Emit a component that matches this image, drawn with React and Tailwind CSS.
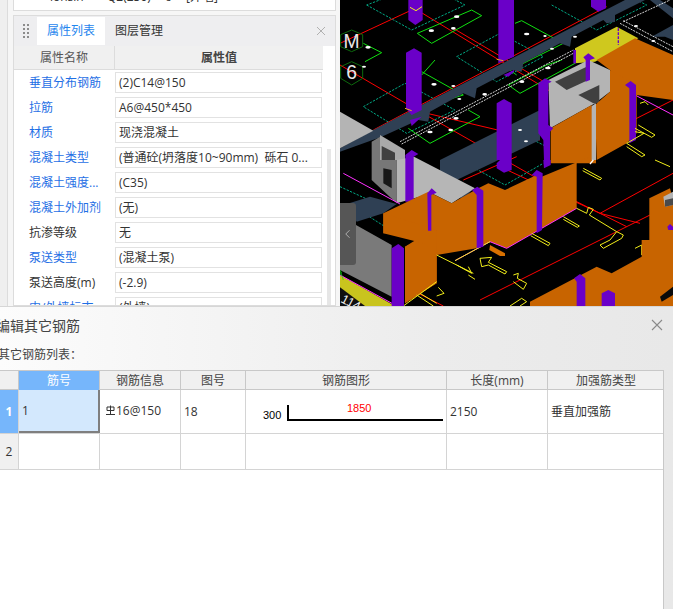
const FONT = "font-['Open_Sans','Noto_Sans_CJK_SC',sans-serif]";

const props = [
  { name: "垂直分布钢筋", value: "(2)C14@150", blue: true },
  { name: "拉筋", value: "A6@450*450", blue: true },
  { name: "材质", value: "现浇混凝土", blue: true },
  { name: "混凝土类型", value: "(普通砼(坍落度10~90mm)  砾石 0...", blue: true },
  { name: "混凝土强度...", value: "(C35)", blue: true },
  { name: "混凝土外加剂", value: "(无)", blue: true },
  { name: "抗渗等级", value: "无" },
  { name: "泵送类型", value: "(混凝土泵)", blue: true },
  { name: "泵送高度(m)", value: "(-2.9)" },
  { name: "内/外墙标志", value: "(外墙)", blue: true },
];

const gridCols = "grid grid-cols-[19px_81px_81px_65px_201px_101px_116px]";

function PropRow({ name, value, blue }) {
  return (
    <div className="flex h-[25px] shrink-0 items-center">
      <div className={`w-[101px] shrink-0 pt-[1px] pl-[15px] whitespace-nowrap ${blue ? "text-[#1f6fe5]" : "text-[#333]"}`}>
        {name}
      </div>
      <div className="flex h-[21px] w-[207px] shrink-0 items-center border border-[#e2e2e2] bg-white pt-[1px] pl-[3px] whitespace-pre text-[#333]">
        {value}
      </div>
    </div>
  );
}

function Canvas() {
  return (
    <svg viewBox="0 0 999 918" className="block h-[306px] w-[333px]">
      <rect width="999" height="918" fill="#000" />

      {/* axis lines */}
      <g stroke="#f00" strokeWidth="3" fill="none">
        <path d="M0 130 L215 30 M215 20 L690 310 M100 390 L800 20" />
        <path d="M0 195 L240 335 L600 420 M240 335 L600 540 M340 85 L475 165 L620 250" />
        <path d="M370 540 L530 470 M480 500 L780 640 L900 670 M780 640 L999 520" />
        <path d="M700 600 L860 680 M420 900 L930 645 M235 880 L310 918" />
        <path d="M880 360 L999 300" />
      </g>

      {/* dashed outlines */}
      <g stroke="#00a884" strokeWidth="3" fill="none" strokeDasharray="7 4">
        <path d="M80 15 L215 90 L375 15 L250 -50 Z" />
        <path d="M635 15 L770 90 L920 15 L850 -20" />
        <path d="M350 170 L480 100 L610 170 L470 245 Z" />
        <path d="M70 320 L195 250 L345 330 L200 400 Z" />
        <path d="M350 480 L470 420 M520 390 L620 440" />
        <path d="M360 480 L495 555 L610 490 M0 560 L130 620 L80 645 L135 680" />
      </g>

      {/* green rebar boxes */}
      <g stroke="#10e010" strokeWidth="3" fill="none">
        <path d="M232 100 L395 30 L425 47 L275 130 Z" />
        <path d="M525 70 L545 62 L670 130 L510 210 L490 190 M510 210 L530 225" />
        <path d="M245 225 L285 180 M245 215 L370 285 L320 300" />
        <path d="M505 255 L620 195 L665 180 M505 255 L540 280 L705 190" />
        <path d="M205 385 L270 430 L420 350 L385 330" />
        <path d="M520 400 L565 385 L600 410 L550 440 Z" />
        <path d="M70 130 L125 158 L75 185" />
      </g>

      {/* grid circles with axis names */}
      <g stroke="#0d6a0d" strokeWidth="3" fill="none">
        <path d="M35 90 L68 104 L68 140 L35 155 L2 140 L2 104 Z" />
        <path d="M35 185 L68 200 L68 235 L35 255 L2 235 L2 200 Z" />
      </g>
      <g fill="#e8e8e8" fontSize="58" fontFamily="Liberation Sans, sans-serif" textAnchor="middle">
        <text x="35" y="144">M</text>
        <text x="35" y="238">6</text>
      </g>

      {/* beams */}
      <g fill="#2f4054">
        <path d="M0 455 L0 445 L100 390 L855 0 L915 0 L825 45 L825 65 L800 70 L790 60 L695 110 L690 140 L660 130 L550 190 L545 215 L515 210 L410 265 L405 295 L370 280 L270 335 L265 365 L235 360 L125 410 Z" />
        <path d="M300 480 L600 330 L600 420 L350 540 L300 530 Z" />
        <path d="M930 0 L960 0 L999 25 L999 55 Z M935 110 L999 75 L999 120 L975 110 Z" />
        <path d="M20 612 L90 590 L170 612 L130 640 L50 665 Z" />
        <path d="M230 480 L400 565 L370 600 L300 530 Z" />
        <path d="M925 915 L985 880 L999 880 L999 918 L925 918 Z" />
      </g>

      {/* purple columns, top part */}
      <g fill="#6a00c8">
        <path d="M205 0 L248 0 L248 60 L226 75 L205 60 Z" />
        <path d="M198 158 L222 145 L245 158 L245 330 L215 345 L198 325 Z" />
        <path d="M210 360 L245 350 L215 378 Z" />
        <path d="M475 0 L522 0 L522 170 L475 190 Z" />
        <path d="M490 225 L522 210 L522 215 L505 230 Z" />
        <path d="M470 310 L492 297 L515 310 L515 480 L470 480 Z" />
        <path d="M753 0 L798 0 L798 25 L775 35 L753 20 Z" />
      </g>

      {/* white dashed run */}
      <g stroke="#fff" strokeWidth="2.5" fill="none" strokeDasharray="6 3">
        <path d="M180 425 L700 150" />
        <path d="M185 432 L700 160" />
        <path d="M840 70 L999 155" />
        <path d="M850 62 L999 140" />
        <path d="M850 65 L990 0" />
      </g>

      {/* small white marks */}
      <g fill="#fff">
        <ellipse cx="84" cy="142" rx="8" ry="4" />
        <ellipse cx="72" cy="200" rx="6" ry="3" />
        <ellipse cx="274" cy="92" rx="8" ry="4" />
        <ellipse cx="340" cy="85" rx="7" ry="4" />
        <ellipse cx="350" cy="50" rx="8" ry="4" />
        <ellipse cx="560" cy="102" rx="8" ry="4" />
        <ellipse cx="615" cy="108" rx="5" ry="3" />
        <ellipse cx="636" cy="146" rx="6" ry="3" />
        <ellipse cx="705" cy="110" rx="6" ry="3" />
        <ellipse cx="888" cy="78" rx="6" ry="3" />
        <ellipse cx="940" cy="123" rx="6" ry="3" />
        <ellipse cx="282" cy="253" rx="8" ry="4" />
        <ellipse cx="340" cy="258" rx="6" ry="3" />
        <ellipse cx="358" cy="297" rx="6" ry="3" />
        <ellipse cx="434" cy="283" rx="7" ry="4" />
        <ellipse cx="546" cy="245" rx="7" ry="4" />
        <ellipse cx="624" cy="204" rx="8" ry="4" />
        <ellipse cx="348" cy="355" rx="8" ry="4" />
        <ellipse cx="332" cy="390" rx="7" ry="4" />
        <ellipse cx="270" cy="396" rx="8" ry="4" />
        <ellipse cx="540" cy="390" rx="6" ry="3" />
        <ellipse cx="558" cy="424" rx="6" ry="3" />
      </g>

      {/* gray block at far left top */}
      <path d="M0 335 L100 392 L0 445 Z" fill="#b4b4b4" />

      {/* center gray block */}
      <path d="M95 425 L120 410 L120 480 L170 480 L170 610 L95 540 Z" fill="#777" />
      <path d="M120 405 L195 450 L195 480 L120 480 Z" fill="#a9a9a9" />
      <path d="M125 438 L165 458 L165 480 L125 480 Z" fill="#404040" />
      <path d="M130 505 L155 510 L155 565 L130 550 Z" fill="#181818" />
      <path d="M170 480 L222 470 L405 565 L335 610 L275 580 L170 610 Z" fill="#b6b6b6" />
      <path d="M196 465 L215 450 L235 462 L221 470 L221 605 L196 605 Z" fill="#6a00c8" />
      <path d="M10 520 L180 612" stroke="#ff30ff" strokeWidth="3" />

      {/* yellow floor patches */}
      <path d="M705 145 L830 80 L895 115 L765 185 L705 190 Z" fill="#cfc81e" />
      <path d="M835 85 L835 135" stroke="#6a00c8" strokeWidth="4" strokeDasharray="8 4" />

      {/* right upper wall */}
      <path d="M770 180 L885 115 L999 165 L999 300 L890 285 L810 210 Z" fill="#c86400" />
      <path d="M885 285 L999 345" stroke="#ff30ff" strokeWidth="3" />
      <path d="M625 240 L745 180 L810 210 L810 275 L765 310 L630 385 Z" fill="#b4b4b4" />
      <path d="M645 245 L740 200 L740 242 L680 270 Z" fill="#404040" />
      <path d="M715 285 L778 255 L778 310 L760 310 Z" fill="#404040" />
      <path d="M810 210 L890 255 L890 400 L860 430 L770 480 L765 315 L810 275 Z" fill="#c86400" />
      <path d="M632 385 L755 315 L768 480 L768 490 L632 490 Z" fill="#c86400" />
      <path d="M755 318 L768 310 L768 480 L755 480 Z" fill="#b4b4b4" />

      {/* purple wall edges */}
      <g fill="#6a00c8">
        <path d="M595 250 L615 235 L635 245 L625 250 L625 375 L640 385 L630 395 L630 480 L612 480 L610 420 L595 400 Z" />
        <path d="M730 172 L745 160 L765 175 L750 180 L750 240 L737 245 L737 180 Z" />
        <path d="M855 255 L872 243 L888 255 L888 420 L868 430 L868 265 Z" />
        <path d="M700 150 L708 150 L708 190 L700 190 Z" />
      </g>

      {/* yellow rebar, top */}
      <g stroke="#f2ee1a" strokeWidth="3" fill="none">
        <path d="M900 310 L915 305 L925 315 M895 375 L945 405 L935 412 L885 385" />
        <path d="M885 395 L912 400 L860 430 L915 465 L905 470 L860 440" />
        <path d="M210 22 L228 32 L246 20" />
        <path d="M470 178 L490 182 M195 325 L215 332" stroke="#e8b020" />
      </g>

      {/* lower part of scene */}
      <path d="M0 640 L48 675 L155 735 L155 890 L0 810 Z" fill="#7a7a7a" />
      <path d="M0 825 L165 918 L0 918 Z" fill="#c9c41e" />
      <path d="M0 825 L165 915" stroke="#ff30ff" strokeWidth="3" fill="none" />
      <path d="M0 862 L75 918 L0 918 Z" fill="#101010" />
      <text x="0" y="905" fill="#f4f4f4" fontSize="38" fontFamily="Liberation Sans, sans-serif" transform="rotate(28 0 905)">114</text>
      <path d="M0 810 L10 840 M5 815 L-5 835" stroke="#10e010" strokeWidth="2" />

      <path d="M130 640 L265 575 L335 610 L415 565 L445 550 L495 570 L590 525 L605 530 L750 470 L710 490 L710 625 L500 745 L450 725 L410 745 L290 765 L290 850 L195 910 L195 740 L290 690 L130 700 Z" fill="#c86400" />
      <path d="M290 680 L290 850 L195 910 L195 740 Z" fill="#c86400" />
      <path d="M130 640 L290 690 L290 760 L250 730 L130 700 Z" fill="#c86400" />
      <path d="M450 735 L495 760 L495 768 L480 768 L448 750 Z" fill="#d87000" />
      <path d="M480 480 L515 480 L515 510 L492 518 L470 505 L470 490 Z" fill="#6a00c8" />
      <path d="M710 625 L500 745 L450 725 L345 782" stroke="#ff30ff" strokeWidth="3" fill="none" />
      <path d="M190 918 L290 845 M290 765 L400 820 M345 782 L450 725" stroke="#f2ee1a" strokeWidth="3" fill="none" />
      <path d="M760 480 L750 492" stroke="#fff" strokeWidth="4" />

      <g fill="#6a00c8">
        <path d="M155 745 L175 732 L192 745 L192 918 L155 918 Z" />
        <path d="M262 580 L275 565 L290 578 L274 585 L274 692 L264 692 Z" />
        <path d="M396 570 L412 560 L430 572 L430 740 L410 745 L410 585 Z" />
        <path d="M575 525 L590 510 L608 520 L606 690 L590 700 L590 530 Z" />
        <path d="M610 480 L632 480 L632 495 L612 505 Z" />
      </g>

      {/* yellow rebar, bottom */}
      <g stroke="#f2ee1a" strokeWidth="3" fill="none">
        <path d="M730 505 L785 535 L780 540 L728 512" />
        <path d="M575 700 L630 730 L625 737 L572 707" />
        <path d="M670 650 L718 678 L712 682 L670 658" />
        <path d="M710 625 L740 640 L745 622 L760 628 L748 645 L830 695 L850 705 L845 715 L790 745 L780 735 L810 720 L830 695" />
        <path d="M420 775 L455 772 L445 787 L500 815 L495 822 L445 795 L425 800 Z" />
        <path d="M520 825 L535 820 L532 835 L560 850 L550 868 L520 845" />
        <path d="M350 795 L395 820 L385 800 M385 825 L405 838" />
        <path d="M295 862 L312 880 L290 888 M230 885 L280 918 M240 880 L290 910" />
        <path d="M510 918 L545 895 L560 905 L540 918" />
        <path d="M885 745 L905 735 L905 765" />
        <path d="M945 480 L990 500" />
      </g>

      {/* lower right wall */}
      <path d="M570 918 L570 905 L770 800 L815 820 L905 770 L905 720 L928 720 L928 595 L990 565 L999 600 L999 918 Z" fill="#c86400" />
      <path d="M970 590 L999 575 L999 615 L975 620 Z" fill="#b4b4b4" />
      <path d="M975 600 L999 595 L999 615 L975 620 Z" fill="#4a4a4a" />
      <path d="M960 890 L999 860 L999 885 L965 905 Z" fill="#0a0a0a" />
      <g fill="#6a00c8">
        <path d="M702 835 L720 822 L736 835 L736 918 L710 918 L710 845 Z" />
        <path d="M785 880 L805 870 L825 880 L825 918 L785 918 Z" />
        <path d="M982 680 L990 672 L999 680 L999 690 L985 690 Z" />
      </g>
    </svg>
  );
}

export default function App() {
  return (
    <div className={`h-[609px] w-[673px] overflow-hidden bg-white text-[12px] text-[#333] ${FONT}`}>
      {/* top part: property panel and 3d view */}
      <div className="relative flex h-[306px] overflow-hidden">
        <div className="flex h-[306px] w-[340px] shrink-0 overflow-hidden bg-[#f6f6f6]">
          <div className="h-full w-[8px] shrink-0 border-r border-[#dcdcdc] bg-[#efefef]" />
          <div className="ml-[5px] flex w-[323px] shrink-0 flex-col">
            <div className="h-[11px] shrink-0 overflow-hidden border-x border-b border-[#dcdcdc] bg-white">
              <div className="-mt-[12px] flex whitespace-nowrap text-[#333]">
                <span className="w-[93px] pl-[36px]">lonsin</span>
                <span className="w-[58px]">Q2(250)</span>
                <span className="w-[21px]">6</span>
                <span>[外墙]</span>
              </div>
            </div>
            <div className="mt-[4px] flex min-h-0 flex-1 flex-col border border-[#dcdcdc] bg-white">
              <div className="flex h-[30px] shrink-0 items-center bg-[#eeeef0]">
                <div className="flex w-[23px] justify-center">
                  <div className="grid grid-cols-2 gap-[2px]">
                    {[...Array(8)].map((_, i) => (
                      <span key={i} className="h-[2px] w-[2px] bg-[#8c8c8c]" />
                    ))}
                  </div>
                </div>
                <div className="flex h-[28px] w-[68px] items-center justify-center bg-white text-[#1f86ee]">属性列表</div>
                <div className="ml-[10px] text-[#333]">图层管理</div>
                <svg viewBox="0 0 10 10" className="ml-auto mr-[9px] h-[10px] w-[10px] text-[#b0b0b0]">
                  <path d="M1 1 L9 9 M9 1 L1 9" stroke="currentColor" strokeWidth="1" />
                </svg>
              </div>
              <div className="flex h-[24px] w-[309px] shrink-0 items-center border-b border-[#dcdcdc] bg-[#f0f0f0]">
                <div className="flex h-full w-[101px] items-center justify-center border-r border-[#dcdcdc] text-[#555]">属性名称</div>
                <div className="flex flex-1 items-center justify-center font-semibold text-[#444]">属性值</div>
              </div>
              <div className="relative min-h-0 flex-1 overflow-hidden">
                {props.map((p) => (
                  <PropRow key={p.name} {...p} />
                ))}
                <div className="absolute top-[79px] right-[4px] h-[200px] w-[4px] bg-[#e6e6e6]" />
              </div>
            </div>
          </div>
        </div>
        <Canvas />
        {/* collapse handle over the view */}
        <div className="absolute top-[203px] left-[340px] flex h-[62px] w-[16px] items-center justify-center rounded-r-[3px] bg-[#565656]">
          <svg viewBox="0 0 8 12" className="h-[10px] w-[6px] text-[#b8b8b8]">
            <path d="M6 1 L1 6 L6 11" fill="none" stroke="currentColor" strokeWidth="1.2" />
          </svg>
        </div>
      </div>

      {/* dialog */}
      <div className="flex h-[303px] flex-col border-t border-[#d6d6d6] bg-gradient-to-r from-[#fcfcfc] via-[#ececec] via-65% to-[#e8e8e8]">
        <div className="flex h-[36px] shrink-0 items-center">
          <div className="-ml-[4px] text-[14px] text-[#444]">编辑其它钢筋</div>
          <svg viewBox="0 0 12 12" className="ml-auto mr-[10px] h-[12px] w-[12px] text-[#8a8a8a]">
            <path d="M1 1 L11 11 M11 1 L1 11" stroke="currentColor" strokeWidth="1.1" />
          </svg>
        </div>
        <div className="-ml-[2px] flex h-[27px] shrink-0 items-start pt-[3px] text-[#444]">其它钢筋列表：</div>
        <div className="mr-[9px] min-h-0 flex-1 border-t border-r border-[#c8c8c8] bg-white">
          <div className={`${gridCols} h-[19px] border-b border-[#c8c8c8] bg-[#f0f0f0] text-center leading-[19px] text-[#444]`}>
            <div className="border-r border-[#c8c8c8]" />
            <div className="border-r border-[#c8c8c8] bg-[#76b6fb] text-white">筋号</div>
            <div className="border-r border-[#c8c8c8]">钢筋信息</div>
            <div className="border-r border-[#c8c8c8]">图号</div>
            <div className="border-r border-[#c8c8c8]">钢筋图形</div>
            <div className="border-r border-[#c8c8c8]">长度(mm)</div>
            <div>加强筋类型</div>
          </div>
          <div className={`${gridCols} h-[44px] border-b border-[#d4d4d4]`}>
            <div className="flex items-center justify-center border-r border-[#d4d4d4] bg-[#76b6fb] font-bold text-white">1</div>
            <div className="flex items-center border-r-2 border-b-2 border-[#7f7f7f] bg-[#d3e8fd] pl-[3px]">1</div>
            <div className="flex items-center border-r border-[#d4d4d4] pl-[5px]">
              <svg viewBox="0 0 11 11" className="mb-[3px] h-[11px] w-[11px] shrink-0 text-[#333]">
                <path d="M2 5.5 L2 2 L9 2 L9 5.5 Z M5.5 0.5 L5.5 9 M1 9.5 L10 9.5" fill="none" stroke="currentColor" strokeWidth="1" />
              </svg>
              <span className="mb-[2px]">16@150</span>
            </div>
            <div className="flex items-center border-r border-[#d4d4d4] pl-[3px]">18</div>
            <div className="relative border-r border-[#d4d4d4]">
              <span className="absolute top-[17px] left-[17px] font-['Liberation_Sans',sans-serif] text-[11px] text-black">300</span>
              <span className="absolute top-[10px] left-[101px] font-['Liberation_Sans',sans-serif] text-[11px] text-[#f00]">1850</span>
              <div className="absolute top-[15px] left-[41px] h-[16px] w-[156px] border-b-2 border-l-2 border-black" />
            </div>
            <div className="flex items-center border-r border-[#d4d4d4] pl-[3px]">2150</div>
            <div className="flex items-center pl-[3px]">垂直加强筋</div>
          </div>
          <div className={`${gridCols} h-[36px] border-b border-[#d4d4d4]`}>
            <div className="flex items-center justify-center border-r border-[#d4d4d4] bg-[#f0f0f0]">2</div>
            <div className="border-r border-[#d4d4d4]" />
            <div className="border-r border-[#d4d4d4]" />
            <div className="border-r border-[#d4d4d4]" />
            <div className="border-r border-[#d4d4d4]" />
            <div className="border-r border-[#d4d4d4]" />
            <div />
          </div>
        </div>
      </div>
    </div>
  );
}
